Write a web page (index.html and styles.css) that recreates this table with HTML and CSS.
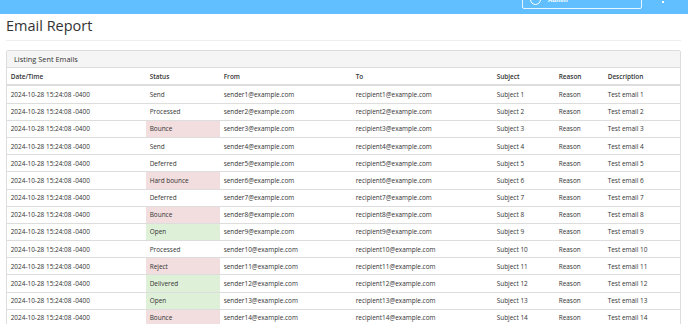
FILE: index.html
```html
<!DOCTYPE html>
<html lang="en">
<head>
    <meta charset="UTF-8">
    <meta name="viewport" content="width=device-width, initial-scale=1.0">
    <title>Email Report</title>
    <link rel="stylesheet" href="styles.css">
</head>
<body>
    <div class="topbar">
        <div class="user-box">
            <span class="user-avatar"></span>
            <span class="user-name">Admin</span>
        </div>
        <span class="topbar-dot"></span>
    </div>
    <div class="page">
        <h1 class="page-header">Email Report</h1>
        <div class="panel">
            <div class="panel-heading">Listing Sent Emails</div>
            <table class="report-table">
                <colgroup>
                    <col class="col-date">
                    <col class="col-status">
                    <col class="col-from">
                    <col class="col-to">
                    <col class="col-subject">
                    <col class="col-reason">
                    <col class="col-desc">
                </colgroup>
                <thead>
                    <tr>
                        <th>Date/Time</th>
                        <th>Status</th>
                        <th>From</th>
                        <th>To</th>
                        <th>Subject</th>
                        <th>Reason</th>
                        <th>Description</th>
                    </tr>
                </thead>
                <tbody id="rows"></tbody>
            </table>
        </div>
    </div>

    <script>
        // status -> cell colour
        var emails = [
            ['Send', ''], ['Processed', ''], ['Bounce', 'danger'], ['Send', ''],
            ['Deferred', ''], ['Hard bounce', 'danger'], ['Deferred', ''], ['Bounce', 'danger'],
            ['Open', 'success'], ['Processed', ''], ['Reject', 'danger'], ['Delivered', 'success'],
            ['Open', 'success'], ['Bounce', 'danger']
        ];
        var tbody = document.getElementById('rows');
        emails.forEach(function (e, i) {
            var n = i + 1;
            var tr = document.createElement('tr');
            tr.innerHTML =
                '<td>2024-10-28 15:24:08 -0400</td>' +
                '<td class="' + e[1] + '">' + e[0] + '</td>' +
                '<td>sender' + n + '@example.com</td>' +
                '<td>recipient' + n + '@example.com</td>' +
                '<td>Subject ' + n + '</td>' +
                '<td>Reason</td>' +
                '<td>Test email ' + n + '</td>';
            tbody.appendChild(tr);
        });
    </script>
</body>
</html>
```

FILE: styles.css
```css
html, body {
    overflow: hidden;
}
body {
    margin: 0;
    font-family: 'Open Sans', 'Liberation Sans', sans-serif;
    font-size: 6.44px;
    color: #333;
    background-color: #fff;
}
.topbar {
    height: 14px;
    background-color: #62bfff;
    display: flex;
    align-items: flex-start;
    overflow: hidden;
}
.user-box {
    margin-left: 522px;
    margin-top: -10px;
    width: 120px;
    height: 19px;
    border: 1px solid rgba(255,255,255,0.85);
    border-radius: 2px;
    display: flex;
    align-items: center;
    box-sizing: border-box;
    padding-left: 7px;
}
.user-avatar {
    width: 11px;
    height: 11px;
    border: 1px solid #fff;
    border-radius: 50%;
    box-sizing: border-box;
    margin-right: 7px;
}
.user-name {
    color: #fff;
    font-size: 6px;
    font-weight: bold;
    margin-top: 1px;
}
.topbar-dot {
    width: 2px;
    height: 2px;
    background-color: #fff;
    margin-left: 20px;
    margin-top: 1px;
}
.page {
    padding: 0 7px 0 6px;
}
.page-header {
    font-size: 14.5px;
    font-weight: normal;
    line-height: 19px;
    margin: 2px 0 9px;
    padding-bottom: 5px;
    border-bottom: 1px solid #eee;
    color: #333;
}
.panel {
    border: 1px solid #ddd;
    border-radius: 2px;
}
.panel-heading {
    background-color: #f5f5f5;
    border-bottom: 1px solid #ddd;
    font-size: 7.4px;
    line-height: 8px;
    padding: 4px 7px;
}
.report-table {
    width: 100%;
    border-collapse: collapse;
    table-layout: fixed;
}
.col-date { width: 139px; }
.col-status { width: 74px; }
.col-from { width: 132px; }
.col-to { width: 141px; }
.col-subject { width: 62px; }
.col-reason { width: 49px; }
.report-table th,
.report-table td {
    text-align: left;
    padding: 3.7px;
    line-height: 9px;
    white-space: nowrap;
}
.report-table th {
    font-weight: 600;
    border-bottom: 2px solid #ddd;
}
.report-table td {
    border-top: 1px solid #ddd;
    padding-top: 3.6px;
    padding-bottom: 3.6px;
}
.report-table td.danger {
    background-color: #f2dede;
}
.report-table td.success {
    background-color: #dff0d8;
}
```
